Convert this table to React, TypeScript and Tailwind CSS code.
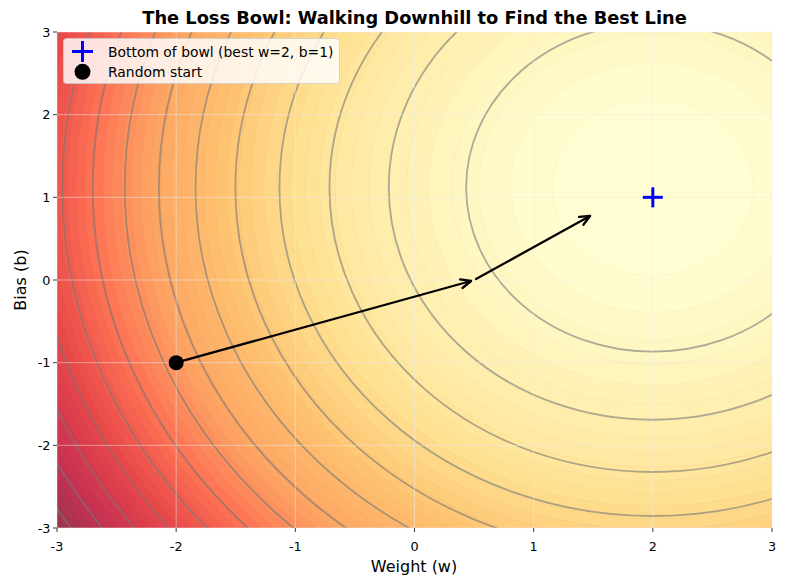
const PX0 = 57;
const PX1 = 772;
const PY0 = 32;
const PY1 = 528;

const sx = (w: number) => PX0 + ((w + 3) * (PX1 - PX0)) / 6;
const sy = (b: number) => PY1 - ((b + 3) * (PY1 - PY0)) / 6;

// bowl geometry (pixels per sqrt(loss unit))
const CX = sx(2);
const CY = sy(1.12);
const RX = 186.7;
const RY = 164.3;
const LMAX = 14.48;
const BANDS = 50;

// matplotlib YlOrRd
const STOPS: [number, number, number][] = [
  [255, 255, 204],
  [255, 237, 160],
  [254, 217, 118],
  [254, 178, 76],
  [253, 141, 60],
  [252, 78, 42],
  [227, 26, 28],
  [189, 0, 38],
  [128, 0, 38],
];

function cmap(t: number, alpha = 0.8, dark = 0) {
  const x = Math.max(0, Math.min(1, t)) * (STOPS.length - 1);
  const i = Math.min(STOPS.length - 2, Math.floor(x));
  const f = x - i;
  const c = STOPS[i].map((v, k) => v + (STOPS[i + 1][k] - v) * f);
  const out = c.map((v) => Math.round((v * alpha + 255 * (1 - alpha)) * (1 - dark)));
  return `rgb(${out[0]},${out[1]},${out[2]})`;
}

const ticks = [-3, -2, -1, 0, 1, 2, 3];

function Bowl() {
  const fills = [];
  for (let k = BANDS - 1; k >= 1; k--) {
    const r = Math.sqrt((k * LMAX) / BANDS);
    const t = (k - 0.5) / BANDS;
    fills.push(
      <ellipse
        key={k}
        cx={CX}
        cy={CY}
        rx={RX * r}
        ry={RY * r}
        fill={cmap(t)}
        stroke={cmap(t + 0.01, 0.8, 0.05)}
        strokeWidth={0.5}
      />
    );
  }
  const lines = [];
  for (let l = 1; l <= 14; l++) {
    const r = Math.sqrt(l);
    lines.push(
      <ellipse
        key={l}
        cx={CX}
        cy={CY}
        rx={RX * r}
        ry={RY * r}
        fill="none"
        stroke="#767676"
        strokeOpacity={0.6}
        strokeWidth={1.8}
      />
    );
  }
  return (
    <g clipPath="url(#plot)">
      <rect x={PX0} y={PY0} width={PX1 - PX0} height={PY1 - PY0} fill={cmap((BANDS - 0.5) / BANDS)} />
      {fills}
      {lines}
    </g>
  );
}

function Arrow({ x1, y1, x2, y2 }: { x1: number; y1: number; x2: number; y2: number }) {
  const a = Math.atan2(y2 - y1, x2 - x1);
  const len = 11;
  const spread = 0.42;
  const h1x = x2 - len * Math.cos(a - spread);
  const h1y = y2 - len * Math.sin(a - spread);
  const h2x = x2 - len * Math.cos(a + spread);
  const h2y = y2 - len * Math.sin(a + spread);
  return (
    <g stroke="#000" strokeWidth={2.3} fill="none" strokeLinecap="round" strokeLinejoin="round">
      <line x1={x1} y1={y1} x2={x2} y2={y2} />
      <polyline points={`${h1x},${h1y} ${x2},${y2} ${h2x},${h2y}`} />
    </g>
  );
}

function Plus({ x, y, s, w }: { x: number; y: number; s: number; w: number }) {
  return (
    <g stroke="#0000ff" strokeWidth={w}>
      <line x1={x - s} y1={y} x2={x + s} y2={y} />
      <line x1={x} y1={y - s} x2={x} y2={y + s} />
    </g>
  );
}

export default function App() {
  return (
    <div className="w-[786px] h-[586px] bg-white overflow-hidden">
      <svg
        width={786}
        height={586}
        viewBox="0 0 786 586"
        className="block font-['DejaVu_Sans',sans-serif]"
      >
        <defs>
          <clipPath id="plot">
            <rect x={PX0} y={PY0} width={PX1 - PX0} height={PY1 - PY0} />
          </clipPath>
        </defs>

        <Bowl />

        {/* grid */}
        <g stroke="#ececec" strokeOpacity={0.55} strokeWidth={0.9}>
          {ticks.map((t) => (
            <line key={`gx${t}`} x1={sx(t)} y1={PY0} x2={sx(t)} y2={PY1} />
          ))}
          {ticks.map((t) => (
            <line key={`gy${t}`} x1={PX0} y1={sy(t)} x2={PX1} y2={sy(t)} />
          ))}
        </g>

        {/* steps */}
        <Arrow x1={sx(-2)} y1={sy(-1)} x2={471} y2={281} />
        <Arrow x1={476} y1={279} x2={590} y2={216} />
        <circle cx={sx(-2)} cy={sy(-1)} r={7.5} fill="#000" />
        <Plus x={sx(2)} y={sy(1)} s={10} w={3} />

        {/* ticks */}
        <g stroke="#222" strokeWidth={0.9}>
          {ticks.map((t) => (
            <line key={`tx${t}`} x1={sx(t)} y1={PY1} x2={sx(t)} y2={PY1 + 4} />
          ))}
          {ticks.map((t) => (
            <line key={`ty${t}`} x1={PX0 - 4} y1={sy(t)} x2={PX0} y2={sy(t)} />
          ))}
        </g>
        <g fontSize={12.8} fill="#000">
          {ticks.map((t) => (
            <text key={`lx${t}`} x={sx(t)} y={550.5} textAnchor="middle">
              {t}
            </text>
          ))}
          {ticks.map((t) => (
            <text key={`ly${t}`} x={50.5} y={sy(t) + 4.6} textAnchor="end">
              {t}
            </text>
          ))}
        </g>

        {/* labels */}
        <text x={414.5} y={24} textAnchor="middle" fontSize={17.8} fontWeight="bold" fill="#000">
          The Loss Bowl: Walking Downhill to Find the Best Line
        </text>
        <text x={414} y={572} textAnchor="middle" fontSize={16} fill="#000">
          Weight (w)
        </text>
        <text
          x={0}
          y={0}
          transform="translate(26,280) rotate(-90)"
          textAnchor="middle"
          fontSize={16}
          fill="#000"
        >
          Bias (b)
        </text>

        {/* legend */}
        <rect
          x={63.5}
          y={38.5}
          width={276}
          height={45}
          rx={3}
          fill="#ffffff"
          fillOpacity={0.82}
          stroke="#cccccc"
          strokeOpacity={0.8}
        />
        <Plus x={82.5} y={51.5} s={10.5} w={3} />
        <circle cx={82.5} cy={71.8} r={8} fill="#000" />
        <g fontSize={13.9} fill="#000">
          <text x={108} y={56.6}>Bottom of bowl (best w=2, b=1)</text>
          <text x={108} y={76.8}>Random start</text>
        </g>
      </svg>
    </div>
  );
}
